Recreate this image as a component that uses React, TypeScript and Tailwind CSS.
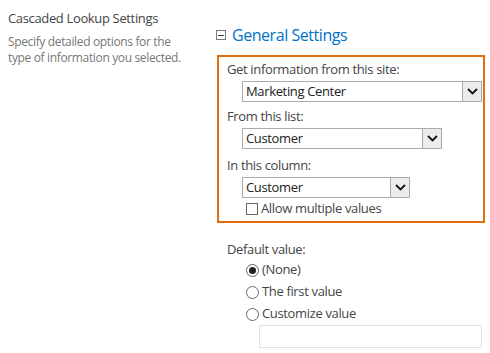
import React from 'react';

const Chevron = () => (
  <svg width="11" height="7" viewBox="0 0 11 7">
    <path d="M1 1 L5.5 5.5 L10 1" fill="none" stroke="#111" strokeWidth="1.8" />
  </svg>
);

const Select = ({ value, width }: { value: string; width: string }) => (
  <div className={`flex h-[21px] items-stretch border border-[#ababab] bg-white ${width}`}>
    <div className="flex flex-1 items-center pl-[3px] text-[13px] text-[#222]">{value}</div>
    <div className="flex w-[19px] items-center justify-center border-l border-[#ababab] bg-[#ececec]">
      <Chevron />
    </div>
  </div>
);

const Radio = ({ checked, label }: { checked?: boolean; label: string }) => (
  <div className="flex h-[22px] items-center gap-[3px]">
    <div className="flex h-[13px] w-[13px] items-center justify-center rounded-full border border-[#666] bg-white">
      {checked && <div className="h-[7px] w-[7px] rounded-full bg-[#222]" />}
    </div>
    <span>{label}</span>
  </div>
);

export default function App() {
  return (
    <div
      className="flex h-[353px] w-[490px] bg-white text-[13px] tracking-[-0.35px] text-[#444]"
      style={{ fontFamily: '"Open Sans", "Noto Sans", sans-serif' }}
    >
      {/* left description */}
      <div className="w-[216px] shrink-0 pl-2 pt-[9px]">
        <div className="leading-[18px] text-[#444]">Cascaded Lookup Settings</div>
        <div className="mt-[7px] w-[175px] text-[12px] leading-[16px] text-[#777]">
          Specify detailed options for the type of information you selected.
        </div>
      </div>

      {/* right panel */}
      <div className="flex-1 pt-[24px]">
        <div className="flex items-center gap-[6px]">
          <div className="flex h-[10px] w-[10px] items-center justify-center border border-[#777]">
            <div className="h-px w-[6px] bg-[#444]" />
          </div>
          <span className="text-[16px] leading-[22px] tracking-[-0.45px] text-[#0072c6]">General Settings</span>
        </div>

        <div className="mt-[9px] ml-px w-[268px] border-2 border-[#e56d0b] pb-[2px] pl-[8px] pt-[2px]">
          <div className="leading-[20px]">Get information from this site:</div>
          <div className="ml-[15px] mt-[2px]">
            <Select value="Marketing Center" width="w-[240px]" />
          </div>
          <div className="mt-[4px] leading-[20px]">From this list:</div>
          <div className="ml-[15px] mt-[2px]">
            <Select value="Customer" width="w-[200px]" />
          </div>
          <div className="mt-[6px] leading-[20px]">In this column:</div>
          <div className="ml-[15px] mt-[2px]">
            <Select value="Customer" width="w-[168px]" />
          </div>
          <div className="ml-[19px] mt-px flex h-[20px] items-center gap-[3px]">
            <div className="h-[12px] w-[12px] border border-[#666] bg-white" />
            <span>Allow multiple values</span>
          </div>
        </div>

        <div className="ml-[11px] mt-[16px] leading-[20px]">Default value:</div>
        <div className="ml-[30px]">
          <Radio checked label="(None)" />
          <Radio label="The first value" />
          <Radio label="Customize value" />
          <div className="ml-[13px] h-[23px] w-[223px] border border-[#e1e1e1] bg-white" />
        </div>
      </div>
    </div>
  );
}
